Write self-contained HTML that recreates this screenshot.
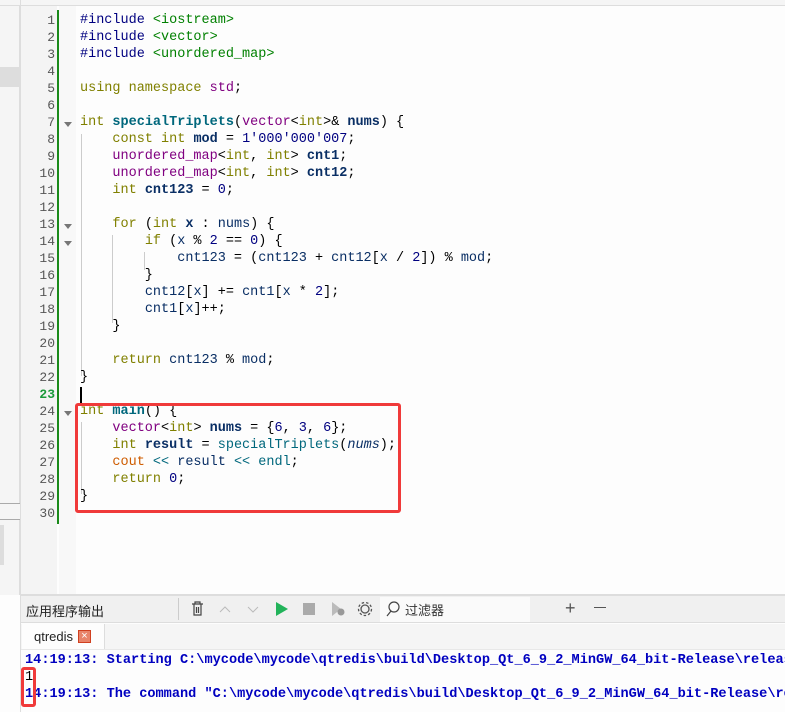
<!DOCTYPE html>
<html><head><meta charset="utf-8"><style>
*{margin:0;padding:0;box-sizing:border-box}
body{width:785px;height:712px;overflow:hidden;background:#fdfdfd;position:relative;font-family:"Liberation Sans","Noto Sans CJK SC",sans-serif}
.abs{position:absolute}
.code{position:absolute;left:80px;top:12px;font-family:"Liberation Mono",monospace;font-size:13.5px;line-height:17px;white-space:pre;color:#000}
.ln{position:absolute;left:20px;width:35px;top:12px;text-align:right;font-family:"Liberation Mono",monospace;font-size:13px;line-height:17px;color:#555;white-space:pre}
.k{color:#808000}.t{color:#800080}.s{color:#008000}.p{color:#000080}.n{color:#000080}.v{color:#092e64}.f{color:#00677c}.b{font-weight:bold}.g{color:#ce5c00}.i{font-style:italic}
.out{position:absolute;left:25px;font-family:"Liberation Mono",monospace;font-size:13.6px;font-weight:bold;color:#0000c0;white-space:pre}
.fold{position:absolute;left:64px;width:0;height:0;border-left:4px solid transparent;border-right:4px solid transparent;border-top:5px solid #777}
</style></head><body>
<div class="abs" style="left:0;top:0;width:20px;height:595px;background:#f5f5f5;border-right:1px solid #ddd"></div>
<div class="abs" style="left:0;top:67px;width:20px;height:20px;background:#ddd"></div>
<div class="abs" style="left:0;top:0;width:785px;height:6px;border-bottom:1px solid #ddd;background:#f5f5f5"></div>
<div class="abs" style="left:0;top:503px;width:20px;height:17px;border:1px solid #aaa;background:#f5f5f5;border-width:1px 0"></div>
<div class="abs" style="left:0;top:525px;width:4px;height:40px;background:#ddd"></div>
<div class="abs" style="left:21px;top:6px;width:36px;height:590px;background:#f4f4f4"></div>
<div class="abs" style="left:57px;top:10px;width:2px;height:514px;background:#1a8a1a"></div>
<div class="abs" style="left:59px;top:6px;width:17px;height:590px;background:#f8f8f8"></div>
<div class="fold" style="top:122px"></div><div class="fold" style="top:224px"></div><div class="fold" style="top:241px"></div><div class="fold" style="top:411px"></div>
<div class="abs" style="left:81px;top:134px;width:1px;height:242px;background:#ccc"></div>
<div class="abs" style="left:112px;top:235px;width:1px;height:88px;background:#ccc"></div>
<div class="abs" style="left:144px;top:252px;width:1px;height:18px;background:#ccc"></div>
<div class="abs" style="left:81px;top:422px;width:1px;height:72px;background:#ccc"></div>
<div class="abs" style="left:80px;top:387px;width:2px;height:16px;background:#000"></div>
<div class="ln">1
2
3
4
5
6
7
8
9
10
11
12
13
14
15
16
17
18
19
20
21
22
<span style="color:#1a9a3a;font-weight:bold">23</span>
24
25
26
27
28
29
30</div>
<div class="code"><span class="p">#include</span> <span class="s">&lt;iostream&gt;</span>
<span class="p">#include</span> <span class="s">&lt;vector&gt;</span>
<span class="p">#include</span> <span class="s">&lt;unordered_map&gt;</span>

<span class="k">using namespace</span> <span class="t">std</span>;

<span class="k">int</span> <span class="f b">specialTriplets</span>(<span class="t">vector</span>&lt;<span class="k">int</span>&gt;&amp; <span class="v b">nums</span>) {
    <span class="k">const int</span> <span class="v b">mod</span> = <span class="n">1'000'000'007</span>;
    <span class="t">unordered_map</span>&lt;<span class="k">int</span>, <span class="k">int</span>&gt; <span class="v b">cnt1</span>;
    <span class="t">unordered_map</span>&lt;<span class="k">int</span>, <span class="k">int</span>&gt; <span class="v b">cnt12</span>;
    <span class="k">int</span> <span class="v b">cnt123</span> = <span class="n">0</span>;

    <span class="k">for</span> (<span class="k">int</span> <span class="v b">x</span> : <span class="v">nums</span>) {
        <span class="k">if</span> (<span class="v">x</span> % <span class="n">2</span> == <span class="n">0</span>) {
            <span class="v">cnt123</span> = (<span class="v">cnt123</span> + <span class="v">cnt12</span>[<span class="v">x</span> / <span class="n">2</span>]) % <span class="v">mod</span>;
        }
        <span class="v">cnt12</span>[<span class="v">x</span>] += <span class="v">cnt1</span>[<span class="v">x</span> * <span class="n">2</span>];
        <span class="v">cnt1</span>[<span class="v">x</span>]++;
    }

    <span class="k">return</span> <span class="v">cnt123</span> % <span class="v">mod</span>;
}

<span class="k">int</span> <span class="f b">main</span>() {
    <span class="t">vector</span>&lt;<span class="k">int</span>&gt; <span class="v b">nums</span> = {<span class="n">6</span>, <span class="n">3</span>, <span class="n">6</span>};
    <span class="k">int</span> <span class="v b">result</span> = <span class="f">specialTriplets</span>(<span class="v i">nums</span>);
    <span class="g">cout</span> <span class="f">&lt;&lt;</span> <span class="v">result</span> <span class="f">&lt;&lt;</span> <span class="f">endl</span>;
    <span class="k">return</span> <span class="n">0</span>;
}</div>
<div class="abs" style="left:75px;top:403px;width:326px;height:110px;border:3px solid #f03a3a;border-radius:3px"></div>
<div class="abs" style="left:20px;top:594px;width:765px;height:2px;background:#ddd"></div>
<div class="abs" style="left:20px;top:596px;width:765px;height:27px;background:#f0f0f0;border-bottom:1px solid #ddd"></div>
<div class="abs" style="left:26px;top:601px;font-size:13px;color:#222">应用程序输出</div>
<div class="abs" style="left:178px;top:598px;width:1px;height:22px;background:#ccc"></div>
<svg class="abs" style="left:190px;top:600px" width="200" height="18" viewBox="0 0 200 18">
<g fill="none" stroke="#444" stroke-width="1.2"><path d="M2 4h11M5 4V2h5v2M4 4v11h7V4M6.5 7v6M8.5 7v6"/></g>
<path d="M30 12l5-5 5 5" fill="none" stroke="#bbb" stroke-width="1"/>
<path d="M58 7l5 5 5-5" fill="none" stroke="#bbb" stroke-width="1"/>
<path d="M86 2v14l12-7z" fill="#22b35a"/>
<rect x="113" y="3" width="12" height="12" fill="#aaa"/>
<path d="M142 2v14l9-7z" fill="#bbb"/><circle cx="151" cy="12" r="3.5" fill="#999"/>
<circle cx="175" cy="9" r="4" fill="none" stroke="#555" stroke-width="1.3"/><circle cx="175" cy="9" r="6.5" fill="none" stroke="#555" stroke-width="1.3" stroke-dasharray="2.5 2"/>
</svg>
<div class="abs" style="left:380px;top:597px;width:150px;height:25px;background:#fafafa"></div>
<svg class="abs" style="left:385px;top:600px" width="16" height="18"><circle cx="9" cy="7" r="5" fill="none" stroke="#444" stroke-width="1.2"/><path d="M6 11l-4 5" stroke="#444" stroke-width="1.2"/></svg>
<div class="abs" style="left:405px;top:600px;font-size:13px;color:#333">过滤器</div>
<div class="abs" style="left:565px;top:597px;font-size:18px;color:#555;line-height:22px">+</div>
<div class="abs" style="left:594px;top:607px;width:12px;height:1px;background:#555"></div>
<div class="abs" style="left:20px;top:624px;width:765px;height:33px;background:#f5f5f5"></div>
<div class="abs" style="left:22px;top:624px;width:83px;height:25px;background:#fdfdfd;border-right:1px solid #ddd"></div>
<div class="abs" style="left:20px;top:649px;width:765px;height:63px;background:#fdfdfd;border-top:1px solid #e8e8e8"></div>
<div class="abs" style="left:34px;top:629px;font-size:13px;color:#222">qtredis</div>
<div class="abs" style="left:78px;top:630px;width:13px;height:13px;background:#e8846a;border:1px solid #d04020;color:#fff;font-size:11px;line-height:11px;text-align:center">×</div>
<div class="out" style="top:653px">14:19:13: Starting C:\mycode\mycode\qtredis\build\Desktop_Qt_6_9_2_MinGW_64_bit-Release\release</div>
<div class="out" style="top:670px;color:#000;font-weight:normal">1</div>
<div class="out" style="top:687px">14:19:13: The command "C:\mycode\mycode\qtredis\build\Desktop_Qt_6_9_2_MinGW_64_bit-Release\rel</div>
<div class="abs" style="left:21px;top:667px;width:15px;height:40px;border:3px solid #f03a3a;border-radius:3px"></div>
<div class="abs" style="left:20px;top:0;width:1px;height:712px;background:#ddd"></div>
</body></html>
